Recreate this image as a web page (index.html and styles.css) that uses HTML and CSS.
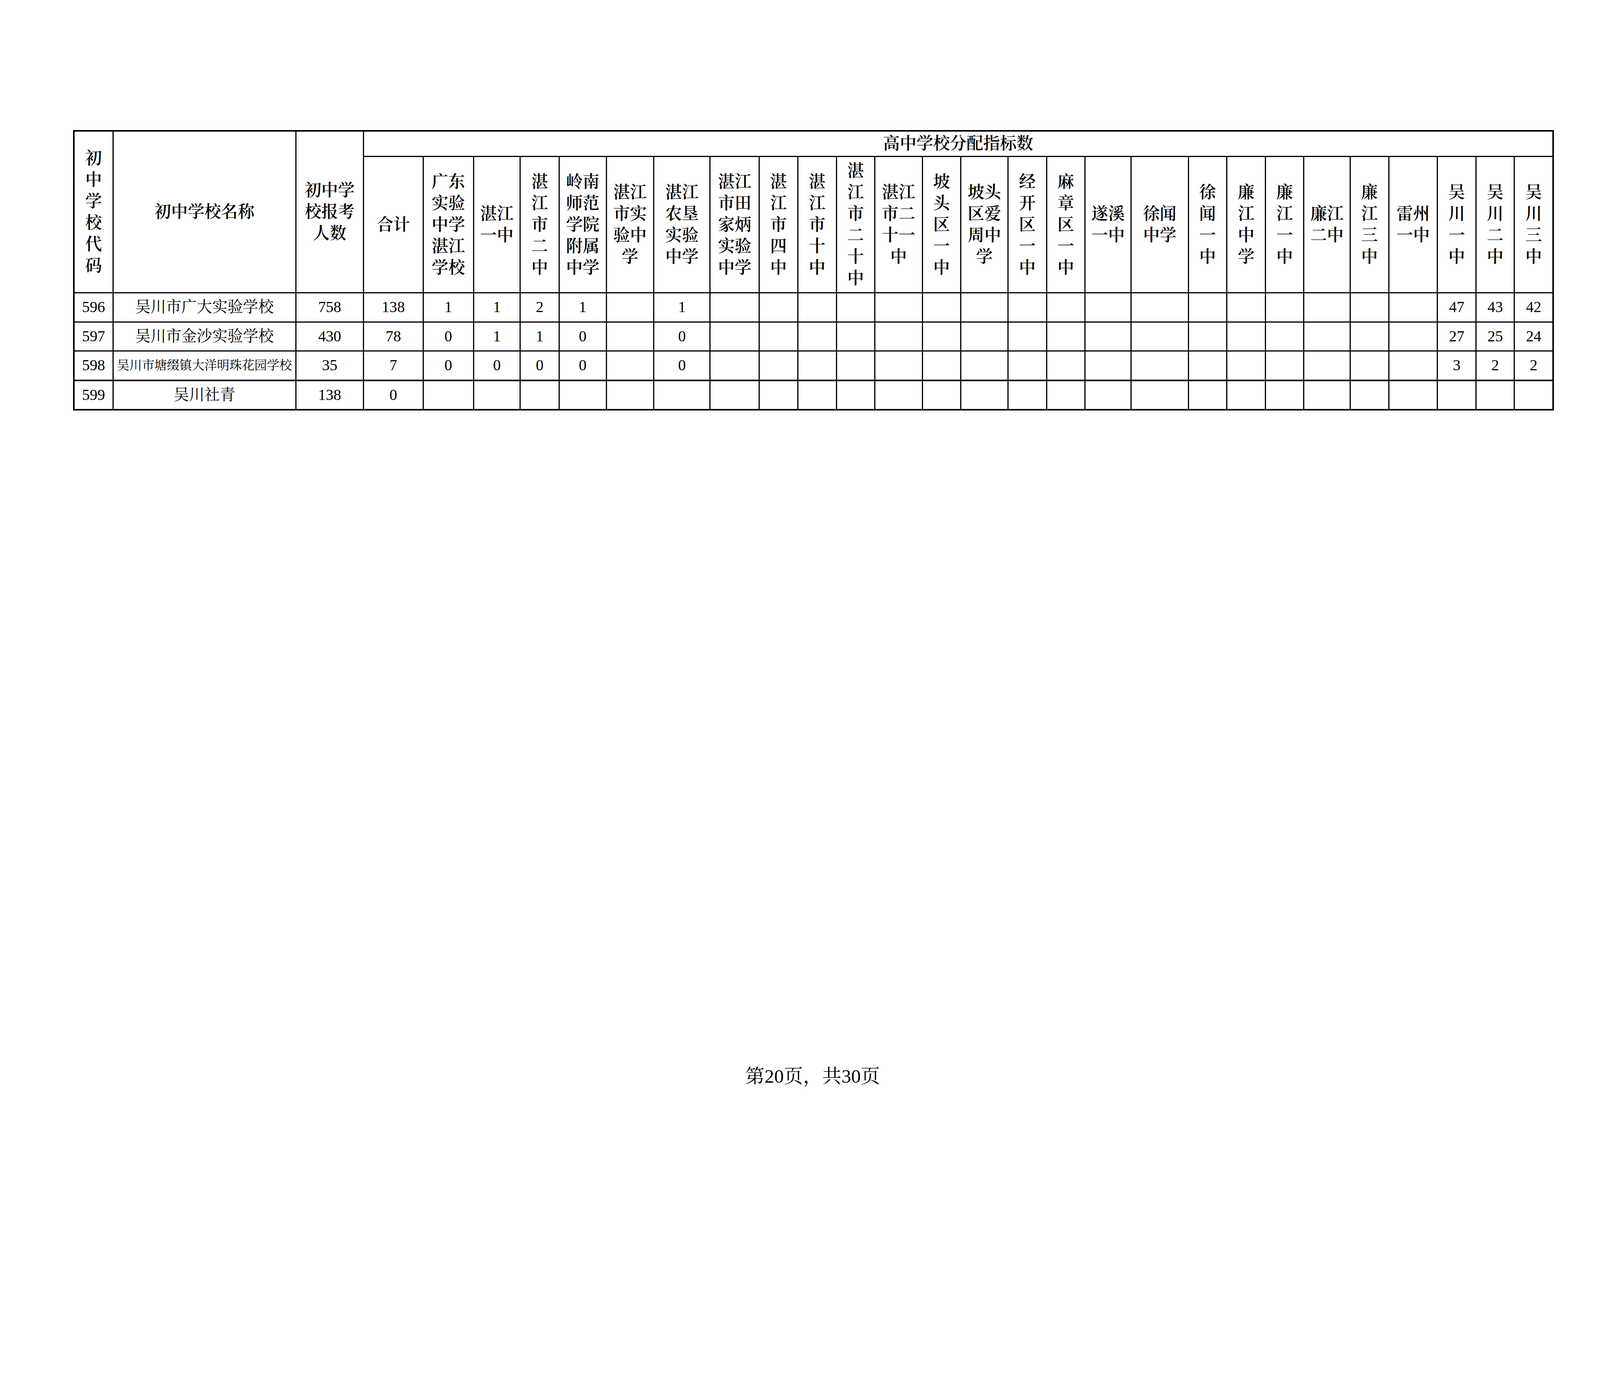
FILE: index.html
```html
<!DOCTYPE html>
<html lang="zh-CN">
<head>
<meta charset="utf-8">
<title>高中学校分配指标数</title>
<link rel="stylesheet" href="styles.css">
</head>
<body>
<div class="page">
  <div class="sheet">
    <table class="quota">
      <colgroup>
        <col><col><col><col><col><col><col><col><col><col>
        <col><col><col><col><col><col><col><col><col><col>
        <col><col><col><col><col><col><col><col><col><col>
      </colgroup>
      <thead>
        <tr class="top">
          <th rowspan="2" class="h">初<br>中<br>学<br>校<br>代<br>码</th>
          <th rowspan="2" class="h">初中学校名称</th>
          <th rowspan="2" class="h">初中学<br>校报考<br>人数</th>
          <th colspan="27" class="h span">高中学校分配指标数</th>
        </tr>
        <tr class="sub">
          <th class="h">合计</th>
          <th class="h">广东<br>实验<br>中学<br>湛江<br>学校</th>
          <th class="h">湛江<br>一中</th>
          <th class="h">湛<br>江<br>市<br>二<br>中</th>
          <th class="h">岭南<br>师范<br>学院<br>附属<br>中学</th>
          <th class="h">湛江<br>市实<br>验中<br>学</th>
          <th class="h">湛江<br>农垦<br>实验<br>中学</th>
          <th class="h">湛江<br>市田<br>家炳<br>实验<br>中学</th>
          <th class="h">湛<br>江<br>市<br>四<br>中</th>
          <th class="h">湛<br>江<br>市<br>十<br>中</th>
          <th class="h">湛<br>江<br>市<br>二<br>十<br>中</th>
          <th class="h">湛江<br>市二<br>十一<br>中</th>
          <th class="h">坡<br>头<br>区<br>一<br>中</th>
          <th class="h">坡头<br>区爱<br>周中<br>学</th>
          <th class="h">经<br>开<br>区<br>一<br>中</th>
          <th class="h">麻<br>章<br>区<br>一<br>中</th>
          <th class="h">遂溪<br>一中</th>
          <th class="h">徐闻<br>中学</th>
          <th class="h">徐<br>闻<br>一<br>中</th>
          <th class="h">廉<br>江<br>中<br>学</th>
          <th class="h">廉<br>江<br>一<br>中</th>
          <th class="h">廉江<br>二中</th>
          <th class="h">廉<br>江<br>三<br>中</th>
          <th class="h">雷州<br>一中</th>
          <th class="h">吴<br>川<br>一<br>中</th>
          <th class="h">吴<br>川<br>二<br>中</th>
          <th class="h">吴<br>川<br>三<br>中</th>
        </tr>
      </thead>
      <tbody>
        <tr>
          <td>596</td><td>吴川市广大实验学校</td><td>758</td><td>138</td>
          <td>1</td><td>1</td><td>2</td><td>1</td><td></td><td>1</td><td></td><td></td><td></td><td></td><td></td><td></td><td></td><td></td><td></td><td></td><td></td><td></td><td></td><td></td><td></td><td></td><td></td>
          <td class="cm">47</td><td class="cm">43</td><td class="cm">42</td>
        </tr>
        <tr>
          <td>597</td><td>吴川市金沙实验学校</td><td>430</td><td>78</td>
          <td>0</td><td>1</td><td>1</td><td>0</td><td></td><td>0</td><td></td><td></td><td></td><td></td><td></td><td></td><td></td><td></td><td></td><td></td><td></td><td></td><td></td><td></td><td></td><td></td><td></td>
          <td class="cm">27</td><td class="cm">25</td><td class="cm">24</td>
        </tr>
        <tr>
          <td>598</td><td class="small">吴川市塘缀镇大洋明珠花园学校</td><td>35</td><td>7</td>
          <td>0</td><td>0</td><td>0</td><td>0</td><td></td><td>0</td><td></td><td></td><td></td><td></td><td></td><td></td><td></td><td></td><td></td><td></td><td></td><td></td><td></td><td></td><td></td><td></td><td></td>
          <td class="cm">3</td><td class="cm">2</td><td class="cm">2</td>
        </tr>
        <tr class="last">
          <td>599</td><td>吴川社青</td><td>138</td><td>0</td>
          <td></td><td></td><td></td><td></td><td></td><td></td><td></td><td></td><td></td><td></td><td></td><td></td><td></td><td></td><td></td><td></td><td></td><td></td><td></td><td></td><td></td><td></td><td></td>
          <td></td><td></td><td></td>
        </tr>
      </tbody>
    </table>
  </div>
  <div class="footer">第20页，共30页</div>
</div>
</body>
</html>
```

FILE: styles.css
```css
/* 1rem = 10 reference pixels of a 4989px wide page */
html {
  font-size: calc(100vw / 498.9);
  overflow: hidden;
}

html, body {
  margin: 0;
  padding: 0;
  background: #ffffff;
}

.page {
  width: 498.9rem;
  height: 352.8rem;
  display: flex;
  flex-direction: column;
  font-family: "Liberation Serif", "Noto Serif CJK SC", "Noto Sans CJK SC", serif;
  color: #000000;
  overflow: hidden;
}

.sheet {
  margin-left: 22.8rem;
  margin-top: 40.6rem;
  width: 461.2rem;
}

.quota {
  width: 461.2rem;
  table-layout: fixed;
  border-collapse: collapse;
  border: 0.5rem solid #000000;
}

.quota col:nth-child(1) { width: 12.2rem; }
.quota col:nth-child(2) { width: 57rem; }
.quota col:nth-child(3) { width: 21.1rem; }
.quota col:nth-child(4) { width: 18.6rem; }
.quota col:nth-child(5) { width: 15.7rem; }
.quota col:nth-child(6) { width: 14.6rem; }
.quota col:nth-child(7) { width: 12.1rem; }
.quota col:nth-child(8) { width: 14.7rem; }
.quota col:nth-child(9) { width: 14.8rem; }
.quota col:nth-child(10) { width: 17.6rem; }
.quota col:nth-child(11) { width: 15.3rem; }
.quota col:nth-child(12) { width: 12rem; }
.quota col:nth-child(13) { width: 12.1rem; }
.quota col:nth-child(14) { width: 11.9rem; }
.quota col:nth-child(15) { width: 14.9rem; }
.quota col:nth-child(16) { width: 11.9rem; }
.quota col:nth-child(17) { width: 14.8rem; }
.quota col:nth-child(18) { width: 12rem; }
.quota col:nth-child(19) { width: 12rem; }
.quota col:nth-child(20) { width: 14.4rem; }
.quota col:nth-child(21) { width: 17.8rem; }
.quota col:nth-child(22) { width: 12rem; }
.quota col:nth-child(23) { width: 12.1rem; }
.quota col:nth-child(24) { width: 11.9rem; }
.quota col:nth-child(25) { width: 14.5rem; }
.quota col:nth-child(26) { width: 12rem; }
.quota col:nth-child(27) { width: 15.2rem; }
.quota col:nth-child(28) { width: 12rem; }
.quota col:nth-child(29) { width: 12rem; }
.quota col:nth-child(30) { width: 12rem; }

.quota th,
.quota td {
  border: 0.4rem solid #000000;
  padding: 0;
  text-align: center;
  vertical-align: middle;
  overflow: hidden;
  white-space: nowrap;
}

.quota th.h {
  font-size: 5.2rem;
  font-weight: 600;
  line-height: 6.7rem;
}

.quota tr.top th.span {
  height: 7.5rem;
  line-height: 6rem;
}

.quota tr.sub th {
  height: 42.2rem;
}

.quota td {
  height: 8.7rem;
  font-size: 4.8rem;
  line-height: 6rem;
}

.quota td.small {
  font-size: 3.9rem;
}

.quota tr.last td {
  border-top-width: 0.6rem;
}

.footer {
  margin-top: auto;
  margin-left: 22.8rem;
  width: 461.2rem;
  text-align: center;
  font-size: 6rem;
  line-height: 8rem;
  padding-bottom: 13.1rem;
}
```
